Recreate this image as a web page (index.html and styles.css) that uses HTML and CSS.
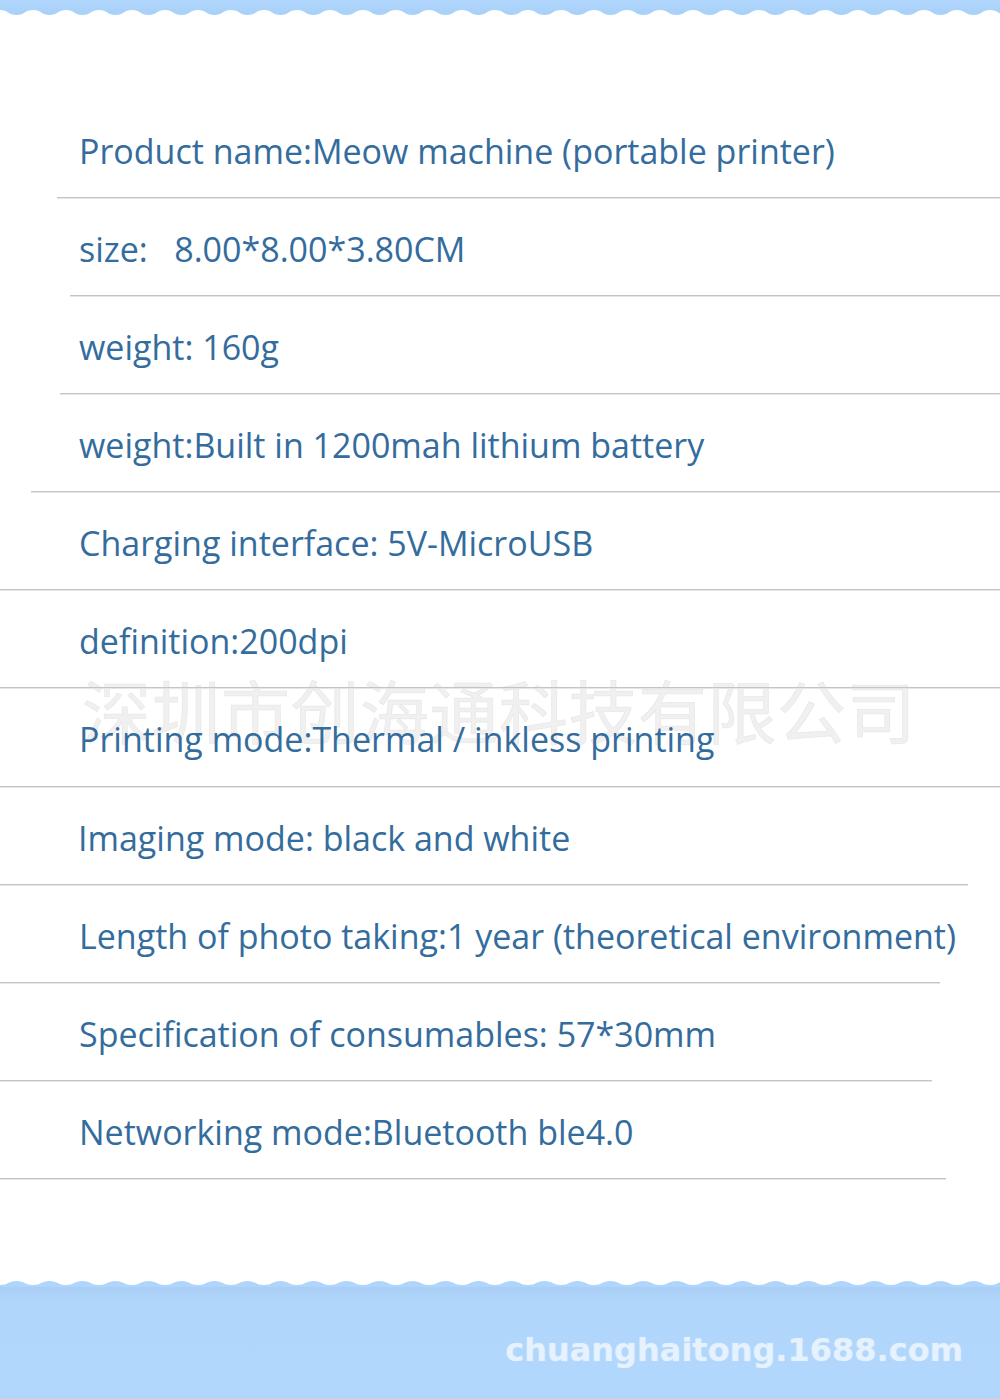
FILE: index.html
```html
<!DOCTYPE html>
<html>
<head>
<meta charset="utf-8">
<link rel="stylesheet" href="styles.css">
</head>
<body>
<div class="page">
  <header class="top-band">
    <svg class="wave" viewBox="0 0 1000 16" preserveAspectRatio="none" width="1000" height="16">
      <defs>
        <linearGradient id="tg" x1="0" y1="0" x2="0" y2="1">
          <stop offset="0" stop-color="#b1d7fd"/>
          <stop offset="1" stop-color="#a8d0f8"/>
        </linearGradient>
        <pattern id="tw" width="33" height="16" patternUnits="userSpaceOnUse">
          <path d="M0 0 H33 V10 C25 10 24.5 15 16.5 15 C8.5 15 8 10 0 10 Z" fill="url(#tg)"/>
        </pattern>
      </defs>
      <rect x="0" y="0" width="1000" height="16" fill="url(#tw)"/>
    </svg>
  </header>

  <main class="specs">
    <div class="watermark">深圳市创海通科技有限公司</div>
    <div class="row r1"><p class="txt">Product name:Meow machine (portable printer)</p><div class="rule"></div></div>
    <div class="row r2"><p class="txt">size:   8.00*8.00*3.80CM</p><div class="rule"></div></div>
    <div class="row r3"><p class="txt">weight: 160g</p><div class="rule"></div></div>
    <div class="row r4"><p class="txt">weight:Built in 1200mah lithium battery</p><div class="rule"></div></div>
    <div class="row r5"><p class="txt">Charging interface: 5V-MicroUSB</p><div class="rule"></div></div>
    <div class="row r6"><p class="txt">definition:200dpi</p><div class="rule"></div></div>
    <div class="row r7"><p class="txt">Printing mode:Thermal / inkless printing</p><div class="rule"></div></div>
    <div class="row r8"><p class="txt">Imaging mode: black and white</p><div class="rule"></div></div>
    <div class="row r9"><p class="txt">Length of photo taking:1 year (theoretical environment)</p><div class="rule"></div></div>
    <div class="row r10"><p class="txt">Specification of consumables: 57*30mm</p><div class="rule"></div></div>
    <div class="row r11"><p class="txt">Networking mode:Bluetooth ble4.0</p><div class="rule"></div></div>
  </main>

  <footer class="bottom-band">
    <svg class="wave" viewBox="0 0 1000 8" preserveAspectRatio="none" width="1000" height="8">
      <defs>
        <pattern id="bw" width="33" height="8" patternUnits="userSpaceOnUse">
          <path d="M0 8 V6 C8 6 8.5 2 16.5 2 C24.5 2 25 6 33 6 V8 Z" fill="#b0d5fa"/>
        </pattern>
      </defs>
      <rect x="0" y="0" width="1000" height="8" fill="url(#bw)"/>
    </svg>
    <div class="band-body">
      <span class="site">chuanghaitong.1688.com</span>
    </div>
  </footer>
</div>
</body>
</html>
```
FILE: styles.css
```css
* { box-sizing: border-box; }
html, body { margin: 0; padding: 0; background: #fff; }
.page {
  width: 1000px;
  height: 1399px;
  display: flex;
  flex-direction: column;
  overflow: hidden;
}
.wave { display: block; }
.top-band { height: 16px; }
.specs {
  position: relative;
  padding-top: 85px;
  flex: 1;
}
.row {
  position: relative;
  height: 98px;
  display: flex;
  flex-direction: column;
}
.txt {
  margin: 0;
  height: 96px;
  line-height: 100px;
  padding-left: 79px;
  font-family: "Open Sans", "Noto Sans", sans-serif;
  font-size: 34px;
  color: #336c9d;
  white-space: pre;
}
.rule {
  height: 2px;
  background: #c4c4c4;
  border-bottom: 1px solid #e6e6e6;
}
.r1 .rule { margin-left: 57px; }
.r2 .rule { margin-left: 70px; }
.r3 .rule { margin-left: 60px; }
.r4 .rule { margin-left: 31px; }
.r7 { height: 99px; }
.r7 .txt { height: 97px; }
.r8 .txt { padding-left: 78px; }
.r8 .rule { margin-right: 32px; }
.r9 .rule { margin-right: 60px; }
.r10 .rule { margin-right: 68px; }
.r11 .rule { margin-right: 54px; }
.watermark {
  position: absolute;
  left: 82px;
  top: 653px;
  font-family: "Noto Sans CJK SC", sans-serif;
  font-weight: 400;
  font-size: 69px;
  line-height: 80px;
  letter-spacing: 0.5px;
  color: rgba(238, 238, 238, 0.9);
  -webkit-text-stroke: 0.6px rgba(220, 220, 220, 0.6);
  text-shadow: 1px 1px 0 rgba(255,255,255,0.9);
  pointer-events: none;
}
.bottom-band {
  height: 120px;
  display: flex;
  flex-direction: column;
}
.band-body {
  flex: 1;
  background: linear-gradient(180deg, #a9cff6 0px, #b1d6fb 14px, #b2d7fc 100%);
  display: flex;
  justify-content: flex-end;
  align-items: flex-start;
  padding-top: 43px;
  padding-right: 37px;
}
.site {
  font-family: "DejaVu Sans", sans-serif;
  font-weight: bold;
  font-size: 32px;
  line-height: 40px;
  color: rgba(234, 244, 254, 0.8);
  text-shadow: 0 0 1px rgba(255,255,255,0.5);
}
```
